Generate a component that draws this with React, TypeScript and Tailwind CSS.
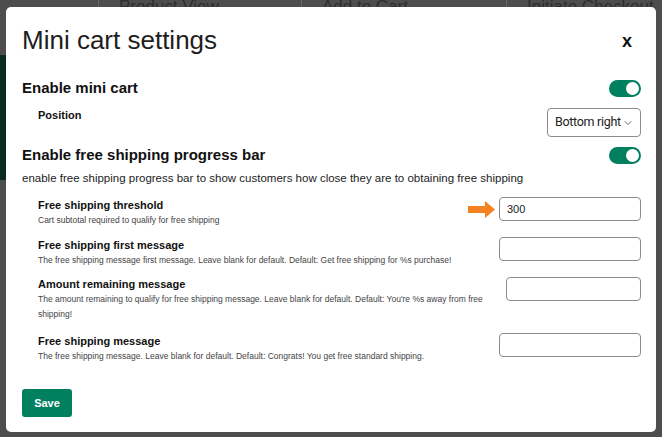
import { ChevronDown } from "lucide-react";

function Toggle() {
  return (
    <div className="flex h-[17px] w-[32px] items-center justify-end rounded-full bg-[#00805f] px-[2px]">
      <div className="h-[13px] w-[13px] rounded-full bg-white" />
    </div>
  );
}

function Arrow() {
  return (
    <svg width="27" height="17" viewBox="0 0 27 17" className="mr-[4px] mt-[4px] shrink-0">
      <path d="M0 5h17V0l10 8.5L17 17v-5H0z" fill="#f58220" />
    </svg>
  );
}

type FieldProps = {
  label: string;
  help: string;
  value?: string;
  arrow?: boolean;
  inputClass?: string;
  textClass?: string;
  className?: string;
};

function Field({ label, help, value, arrow, inputClass = "w-[142px]", textClass = "", className = "" }: FieldProps) {
  return (
    <div className={`flex items-start pl-4 ${className}`}>
      <div className={`flex-1 ${textClass}`}>
        <div className="text-[11px] font-bold leading-[16px] text-[#111]">{label}</div>
        <div className="text-[8.5px] leading-[15px] text-[#444]">{help}</div>
      </div>
      {arrow && <Arrow />}
      <div
        className={`flex h-[24px] shrink-0 items-center rounded-[4px] border border-[#8c8c8c] px-[7px] text-[11px] text-[#222] ${inputClass}`}
      >
        {value}
      </div>
    </div>
  );
}

export default function App() {
  return (
    <div className="relative h-[437px] w-[662px] overflow-hidden bg-[#4d4d4d] font-['Liberation_Sans',Arial,sans-serif]">
      {/* page behind the overlay */}
      <div className="flex h-[7px] items-end overflow-hidden text-[17px] leading-[17px] text-[#2e2e2e]">
        <div className="w-[98px]" />
        <div className="mb-[-8px] w-[203px] border-l border-[#6a6a6a] pl-5">Product View</div>
        <div className="mb-[-8px] w-[205px] border-l border-[#6a6a6a] pl-5">Add to Cart</div>
        <div className="mb-[-8px] flex-1 whitespace-nowrap border-l border-[#6a6a6a] pl-5">Initiate Checkout</div>
      </div>
      <div className="mt-[48px] h-[125px] w-[6px] bg-[#0c2a20]" />

      {/* modal */}
      <div className="absolute left-[6px] top-[7px] flex h-[425px] w-[650px] flex-col rounded-[5px] bg-white pl-4 pr-[15px] pt-[18px]">
        <div className="flex items-center justify-between">
          <h1 className="text-[26px] font-normal leading-[30px] text-[#1e1e1e]">Mini cart settings</h1>
          <span className="mr-[9px] mt-[2px] text-[18px] font-bold leading-none text-[#111]">x</span>
        </div>

        <div className="mt-[23px] flex h-[20px] items-center justify-between">
          <div className="text-[15px] font-bold text-[#111]">Enable mini cart</div>
          <Toggle />
        </div>

        <div className="mt-[10px] flex items-start justify-between pl-4">
          <div className="text-[11px] font-bold leading-[14px] text-[#111]">Position</div>
          <div className="flex h-[29px] w-[94px] items-center justify-between rounded-[4px] border border-[#8c8c8c] pl-[7px] pr-[6px] font-['Roboto',sans-serif] text-[12.5px] tracking-[-0.3px] text-[#222]">
            Bottom right
            <ChevronDown size={12} strokeWidth={1.6} className="text-[#444]" />
          </div>
        </div>

        <div className="mt-[8px] flex h-[20px] items-center justify-between">
          <div className="text-[15px] font-bold text-[#111]">Enable free shipping progress bar</div>
          <Toggle />
        </div>
        <p className="mt-[5px] text-[11.5px] leading-[16px] text-[#222]">
          enable free shipping progress bar to show customers how close they are to obtaining free shipping
        </p>

        <Field
          className="mt-[11px]"
          label="Free shipping threshold"
          help="Cart subtotal required to qualify for free shipping"
          value="300"
          arrow
        />
        <Field
          className="mt-[9px]"
          label="Free shipping first message"
          help="The free shipping message first message. Leave blank for default. Default: Get free shipping for %s purchase!"
        />
        <Field
          className="mt-[8px]"
          label="Amount remaining message"
          help="The amount remaining to qualify for free shipping message. Leave blank for default. Default: You're %s away from free shipping!"
          textClass="max-w-[462px] pr-2"
          inputClass="w-[135px] ml-auto mt-[1px]"
        />
        <Field
          className="mt-[11px]"
          label="Free shipping message"
          help="The free shipping message. Leave blank for default. Default: Congrats! You get free standard shipping."
        />

        <button className="mt-[25px] h-[28px] w-[50px] rounded-[3px] bg-[#00805f] text-[11px] font-bold text-white">
          Save
        </button>
      </div>
    </div>
  );
}
